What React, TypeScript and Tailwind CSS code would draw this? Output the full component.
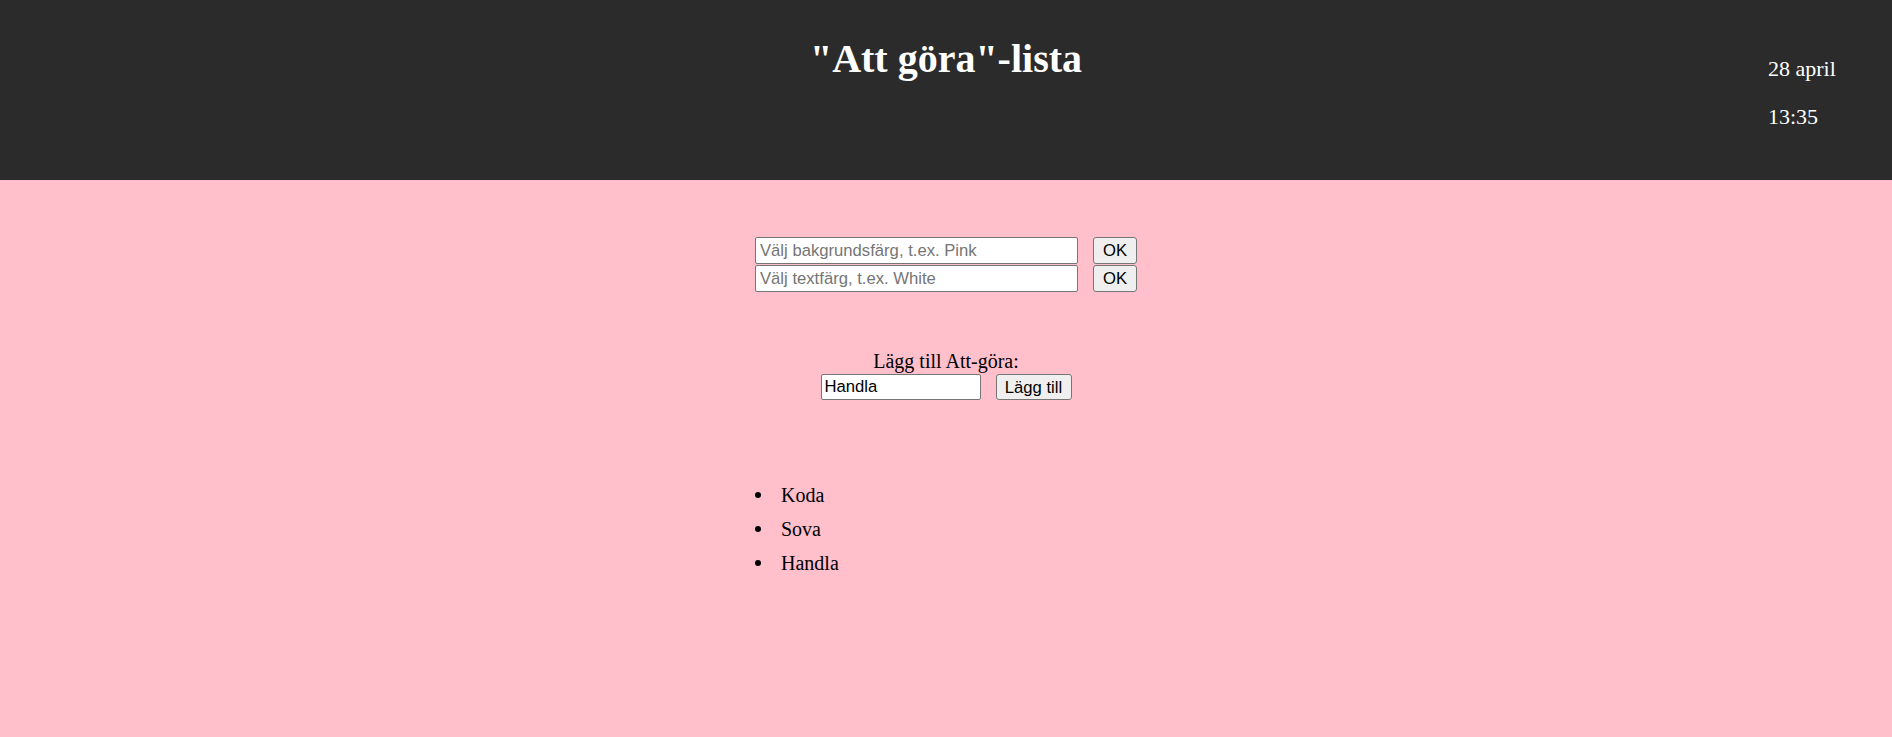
import React from "react";

const todos = ["Koda", "Sova", "Handla"];

export default function App() {
  return (
    <div className="min-h-screen bg-[#ffc0cb] text-black font-['Liberation_Serif','Times_New_Roman',serif]">
      {/* Header */}
      <header className="h-[180px] bg-[#2b2b2b] text-white grid grid-cols-[1fr_auto_1fr]">
        <div />
        <h1 className="pt-[36px] text-[40px] leading-[46px] font-bold">"Att göra"-lista</h1>
        <div className="flex justify-end">
          <div className="w-[124px] pt-[56px] flex flex-col gap-[23px] text-[22px] leading-[25px]">
            <p>28 april</p>
            <p>13:35</p>
          </div>
        </div>
      </header>

      <main className="flex flex-col items-center">
        {/* Colour pickers */}
        <div className="mt-[57px] flex flex-col gap-[1px] font-['Liberation_Sans',Arial,sans-serif] text-[16.67px]">
          <div className="flex gap-[15px]">
            <input
              className="w-[323px] h-[27px] bg-white border border-[#767676] rounded-[2px] px-[4px] placeholder:text-[#757575] outline-none"
              placeholder="Välj bakgrundsfärg, t.ex. Pink"
            />
            <button className="w-[44px] h-[27px] bg-[#efefef] border border-[#767676] rounded-[3px]">OK</button>
          </div>
          <div className="flex gap-[15px]">
            <input
              className="w-[323px] h-[27px] bg-white border border-[#767676] rounded-[2px] px-[4px] placeholder:text-[#757575] outline-none"
              placeholder="Välj textfärg, t.ex. White"
            />
            <button className="w-[44px] h-[27px] bg-[#efefef] border border-[#767676] rounded-[3px]">OK</button>
          </div>
        </div>

        {/* Add todo */}
        <p className="mt-[58px] text-[20px] leading-[23px]">Lägg till Att-göra:</p>
        <div className="mt-[1px] flex gap-[15px] font-['Liberation_Sans',Arial,sans-serif] text-[16.67px]">
          <input
            className="w-[160px] h-[26px] bg-white border border-[#767676] rounded-[2px] px-[3px] outline-none"
            defaultValue="Handla"
          />
          <button className="w-[76px] h-[26px] bg-[#efefef] border border-[#767676] rounded-[3px]">Lägg till</button>
        </div>

        {/* List */}
        <ul className="mt-[78px] w-[382px] text-[20px] leading-[34px]">
          {todos.map((t) => (
            <li key={t} className="flex items-center gap-[20px]">
              <span className="w-[6px] h-[6px] rounded-full bg-black" />
              <span>{t}</span>
            </li>
          ))}
        </ul>
      </main>
    </div>
  );
}
